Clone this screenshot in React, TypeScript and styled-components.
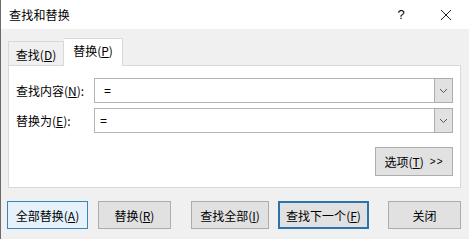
import styled, { createGlobalStyle } from 'styled-components';

const GlobalStyle = createGlobalStyle`
    html, body {
        margin: 0;
        padding: 0;
        background: #f0f0f0;
    }
    body {
        font-family: "Noto Sans CJK SC", "Noto Sans", sans-serif;
        font-size: 12px;
        color: #000;
    }
`;

const StyledWindow = styled.div`
    width: 469px;
    height: 239px;
    background-color: #f0f0f0;
    border-left: 1px solid #6b6b6b;
    box-sizing: border-box;
    display: flex;
    flex-direction: column;
    overflow: hidden;
`;

const StyledTitleBar = styled.div`
    height: 29px;
    background-color: #ffffff;
    display: flex;
    align-items: center;
    padding-left: 8px;
    flex-shrink: 0;
`;

const StyledTitle = styled.div`
    flex: 1;
    font-size: 12px;
    letter-spacing: 0.2px;
`;

const StyledHelp = styled.div`
    width: 14px;
    text-align: center;
    font-family: "Liberation Sans", sans-serif;
    font-size: 13px;
    margin-right: 32px;
`;

const StyledClose = styled.div`
    width: 12px;
    height: 12px;
    margin-right: 17px;
    display: flex;
`;

const StyledTabRow = styled.div`
    display: flex;
    align-items: flex-end;
    margin-top: 9px;
    padding-left: 7px;
    height: 28px;
    position: relative;
    z-index: 2;
`;

const StyledTab = styled.div<{ $active?: boolean }>`
    height: ${p => (p.$active ? '28px' : '25px')};
    width: ${p => (p.$active ? '59px' : '56px')};
    box-sizing: border-box;
    border: 1px solid #d9d9d9;
    border-bottom: ${p => (p.$active ? 'none' : '1px solid #d9d9d9')};
    border-left: ${p => (p.$active ? 'none' : '1px solid #d9d9d9')};
    background-color: ${p => (p.$active ? '#ffffff' : '#f0f0f0')};
    display: flex;
    align-items: center;
    justify-content: center;
    padding-top: ${p => (p.$active ? '0' : '1px')};
    padding-bottom: ${p => (p.$active ? '4px' : '0')};
`;

const StyledPanel = styled.div`
    margin: -1px 8px 0 7px;
    height: 123px;
    box-sizing: border-box;
    background-color: #ffffff;
    border: 1px solid #d9d9d9;
    padding: 12px 7px 0 7px;
    display: flex;
    flex-direction: column;
`;

const StyledFieldRow = styled.div`
    display: flex;
    align-items: center;
    height: 25px;
    margin-bottom: 5px;
`;

const StyledLabel = styled.div`
    width: 78px;
    flex-shrink: 0;
`;

const StyledCombo = styled.div`
    flex: 1;
    height: 25px;
    box-sizing: border-box;
    border: 1px solid #b4b4b4;
    display: flex;
    background: #ffffff;
`;

const StyledComboText = styled.div<{ $indent: number }>`
    flex: 1;
    display: flex;
    align-items: center;
    padding-left: ${p => p.$indent}px;
    font-family: "Liberation Sans", sans-serif;
    font-size: 12px;
`;

const StyledComboArrow = styled.div`
    width: 17px;
    background-color: #e1e1e1;
    display: flex;
    align-items: center;
    justify-content: center;
    margin: -1px -1px -1px 0;
    border: 1px solid #adadad;
`;

const StyledOptionsRow = styled.div`
    display: flex;
    justify-content: flex-end;
    margin-top: 9px;
`;

type ButtonProps = { $w: number; $ml: number; $h?: number; $kind?: 'hover' | 'default' };

const StyledButton = styled.div<ButtonProps>`
    width: ${p => p.$w}px;
    height: ${p => p.$h ?? 28}px;
    margin-left: ${p => p.$ml}px;
    box-sizing: border-box;
    display: flex;
    align-items: center;
    justify-content: center;
    background-color: ${p => (p.$kind === 'hover' ? '#e5f1fb' : '#e1e1e1')};
    border: ${p =>
        p.$kind === 'hover' ? '1px solid #3a86b8' : p.$kind === 'default' ? '2px solid #2a73ae' : '1px solid #adadad'};
    flex-shrink: 0;
`;

const StyledButtonRow = styled.div`
    display: flex;
    margin-top: 13px;
`;

const StyledKey = styled.span`
    text-decoration: underline;
    text-underline-offset: 1px;
`;

const StyledArrows = styled.span`
    font-family: "Liberation Sans", sans-serif;
    font-size: 10px;
    margin-left: 6px;
    letter-spacing: 1px;
`;

const Chevron = () => (
    <svg width="9" height="6" viewBox="0 0 9 6">
        <path d="M1 1 L4.5 4.5 L8 1" fill="none" stroke="#555" strokeWidth="1" />
    </svg>
);

const Key = ({ k }: { k: string }) => (
    <>
        (<StyledKey>{k}</StyledKey>)
    </>
);

const App = () => {
    return (
        <>
            <GlobalStyle />
            <StyledWindow>
                <StyledTitleBar>
                    <StyledTitle>查找和替换</StyledTitle>
                    <StyledHelp>?</StyledHelp>
                    <StyledClose>
                        <svg width="12" height="12" viewBox="0 0 12 12">
                            <path d="M1 1 L11 11 M11 1 L1 11" stroke="#222" strokeWidth="1" />
                        </svg>
                    </StyledClose>
                </StyledTitleBar>

                <StyledTabRow>
                    <StyledTab>
                        查找<Key k="D" />
                    </StyledTab>
                    <StyledTab $active>
                        替换<Key k="P" />
                    </StyledTab>
                </StyledTabRow>

                <StyledPanel>
                    <StyledFieldRow>
                        <StyledLabel>
                            查找内容<Key k="N" />:
                        </StyledLabel>
                        <StyledCombo>
                            <StyledComboText $indent={9}>=</StyledComboText>
                            <StyledComboArrow>
                                <Chevron />
                            </StyledComboArrow>
                        </StyledCombo>
                    </StyledFieldRow>
                    <StyledFieldRow>
                        <StyledLabel>
                            替换为<Key k="E" />:
                        </StyledLabel>
                        <StyledCombo>
                            <StyledComboText $indent={5}>=</StyledComboText>
                            <StyledComboArrow>
                                <Chevron />
                            </StyledComboArrow>
                        </StyledCombo>
                    </StyledFieldRow>
                    <StyledOptionsRow>
                        <StyledButton $w={78} $ml={0} $h={29}>
                            选项<Key k="T" />
                            <StyledArrows>&gt;&gt;</StyledArrows>
                        </StyledButton>
                    </StyledOptionsRow>
                </StyledPanel>

                <StyledButtonRow>
                    <StyledButton $w={81} $ml={6} $kind="hover">
                        全部替换<Key k="A" />
                    </StyledButton>
                    <StyledButton $w={73} $ml={10}>
                        替换<Key k="R" />
                    </StyledButton>
                    <StyledButton $w={78} $ml={20}>
                        查找全部<Key k="I" />
                    </StyledButton>
                    <StyledButton $w={91} $ml={9} $kind="default">
                        查找下一个<Key k="F" />
                    </StyledButton>
                    <StyledButton $w={73} $ml={19}>
                        关闭
                    </StyledButton>
                </StyledButtonRow>
            </StyledWindow>
        </>
    );
};

export default App;
